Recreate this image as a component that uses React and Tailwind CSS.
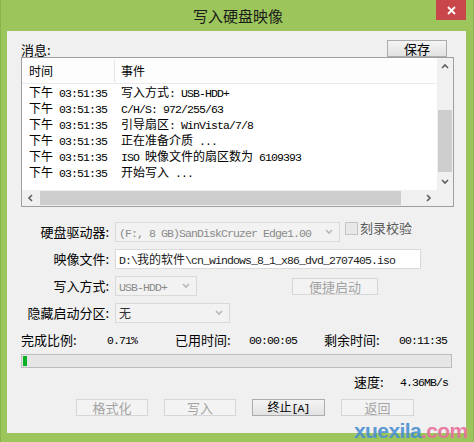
import React from "react";

const CJK = /([\u3000-\u303f\u4e00-\u9fff\uff00-\uffef]+)/;

// SimSun look: 12px CJK, 6px-wide ASCII
function Sim({ text, className = "" }) {
  const parts = text.split(CJK);
  return (
    <span className={"whitespace-pre " + className}>
      {parts.map((p, i) =>
        p === "" ? null : i % 2 === 1 ? (
          <span key={i} className="font-['Noto_Sans_CJK_SC',sans-serif] text-[12px] tracking-normal">
            {p}
          </span>
        ) : (
          <span key={i} className="font-['Liberation_Mono',monospace] text-[11.5px] tracking-[-0.9px]">
            {p}
          </span>
        )
      )}
    </span>
  );
}

function Chevron({ dir = "down", color = "#606060" }) {
  const pts = {
    up: "1,5 4,2 7,5",
    down: "1,2 4,5 7,2",
    left: "5,1 2,4 5,7",
    right: "2,1 5,4 2,7",
  }[dir];
  return (
    <svg width="8" height="8" viewBox="0 0 8 8">
      <polyline points={pts} fill="none" stroke={color} strokeWidth="1.6" />
    </svg>
  );
}

function Button({ children, enabled, className = "" }) {
  return (
    <div
      className={
        "h-[17px] flex items-center justify-center border text-[13px] leading-none " +
        (enabled
          ? "border-[#acacac] bg-[linear-gradient(#f4f4f4,#e2e2e2)] text-black "
          : "border-[#d6d6d6] bg-[#f3f3f3] text-[#a3a3a3] ") +
        className
      }
    >
      {children}
    </div>
  );
}

function Combo({ text, width, dim }) {
  return (
    <div
      className={
        "h-[20px] flex items-center justify-between border border-[#d9d9d9] bg-[#f2f2f2] pl-[3px] pr-[6px] " +
        width
      }
    >
      <Sim text={text} className={dim ? "text-[#8a8a8a]" : "text-[#333]"} />
      <Chevron dir="down" color="#b8b8b8" />
    </div>
  );
}

export default function App() {
  const rows = [
    "写入方式: USB-HDD+",
    "C/H/S: 972/255/63",
    "引导扇区: WinVista/7/8",
    "正在准备介质 ...",
    "ISO 映像文件的扇区数为 6109393",
    "开始写入 ...",
  ];

  return (
    <div className="w-[474px] h-[442px] bg-[#9cc65c] flex flex-col relative overflow-hidden font-['Noto_Sans_CJK_SC',sans-serif] border-x border-[#8ab44c]">
      {/* title bar */}
      <div className="h-[31px] grid grid-cols-[1fr_auto_1fr]">
        <div />
        <div className="self-center text-[15px] leading-none text-[#1a1a1a] pl-[2px]">写入硬盘映像</div>
        <div className="flex justify-end pr-[7px]">
          <div className="w-[30px] h-[20px] bg-[#c9474a] flex items-center justify-center">
            <svg width="9" height="9" viewBox="0 0 9 9">
              <path d="M1 1L8 8M8 1L1 8" stroke="#fff" strokeWidth="1.8" />
            </svg>
          </div>
        </div>
      </div>

      {/* client area */}
      <div className="ml-[6px] mr-[7px] h-[402px] bg-[#f0f0f0] pt-[10px] pl-[14px] pr-[12px] text-black">
        <div className="h-[16px] flex items-end justify-between">
          <span className="text-[13px] leading-none pb-[1px]">消息:</span>
          <Button enabled className="w-[60px] mr-[7px] h-[16px]">
            保存
          </Button>
        </div>

        {/* message list */}
        <div className="h-[150px] border border-[#9f9f9f] bg-white flex flex-col">
          <div className="flex h-[132px]">
            <div className="flex-1 flex flex-col">
              <div className="h-[26px] flex items-center border-b border-[#eaeaea] bg-[#fdfdfd] text-[12px]">
                <div className="w-[93px] pl-[7px] h-[22px] flex items-center border-r border-[#e6e6e6]">时间</div>
                <div className="pl-[6px]">事件</div>
              </div>
              {rows.map((r, i) => (
                <div key={i} className="h-[16px] flex items-center leading-[16px]">
                  <div className="w-[93px] pl-[7px]">
                    <Sim text="下午 03:51:35" />
                  </div>
                  <div className="pl-[6px]">
                    <Sim text={r} />
                  </div>
                </div>
              ))}
            </div>
            <div className="w-[16px] bg-[#f0f0f0] flex flex-col">
              <div className="h-[17px] flex items-center justify-center">
                <Chevron dir="up" />
              </div>
              <div className="h-[35px]" />
              <div className="h-[62px] mx-[1px] bg-[#cdcdcd]" />
              <div className="flex-1" />
              <div className="h-[17px] flex items-center justify-center">
                <Chevron dir="down" />
              </div>
            </div>
          </div>
          <div className="h-[16px] flex bg-[#f0f0f0]">
            <div className="w-[17px] flex items-center justify-center">
              <Chevron dir="left" />
            </div>
            <div className="w-[361px] ml-[1px] my-[1px] bg-[#cdcdcd]" />
            <div className="flex-1" />
            <div className="w-[17px] flex items-center justify-center">
              <Chevron dir="right" />
            </div>
            <div className="w-[16px]" />
          </div>
        </div>

        {/* form */}
        <div className="mt-[15px] grid grid-cols-[88px_1fr] gap-x-[6px] gap-y-[7px] text-[13px]">
          <div className="h-[20px] flex items-center justify-end">硬盘驱动器:</div>
          <div className="h-[20px] flex items-center">
            <Combo text="(F:, 8 GB)SanDiskCruzer Edge1.00" width="w-[225px]" dim />
            <div className="ml-[5px] w-[13px] h-[13px] border border-[#c4c4c4] bg-[#e8e8e8] self-start" />
            <span className="ml-[2px] text-[#5a5a5a] leading-none self-start mt-[-1px]">刻录校验</span>
          </div>

          <div className="h-[20px] flex items-center justify-end">映像文件:</div>
          <div className="h-[20px] flex items-center">
            <div className="w-[306px] h-[20px] border border-[#dadada] bg-white flex items-center pl-[3px]">
              <Sim text="D:\我的软件\cn_windows_8_1_x86_dvd_2707405.iso" className="text-[#222]" />
            </div>
          </div>

          <div className="h-[20px] flex items-center justify-end">写入方式:</div>
          <div className="h-[20px] flex items-center">
            <Combo text="USB-HDD+" width="w-[82px]" dim />
            <Button className="ml-[95px] w-[86px]">便捷启动</Button>
          </div>

          <div className="h-[20px] flex items-center justify-end">隐藏启动分区:</div>
          <div className="h-[20px] flex items-center">
            <Combo text="无" width="w-[115px]" />
          </div>
        </div>

        {/* progress */}
        <div className="mt-[9px] h-[16px] flex items-center text-[13px] leading-[16px]">
          <span className="w-[86px]">完成比例:</span>
          <span className="w-[68px]">
            <Sim text="0.71%" />
          </span>
          <span className="w-[74px]">已用时间:</span>
          <span className="w-[75px]">
            <Sim text="00:00:05" />
          </span>
          <span className="w-[75px]">剩余时间:</span>
          <Sim text="00:11:35" />
        </div>
        <div className="mt-[6px] mr-[2px] h-[14px] border border-[#bcbcbc] bg-[#e6e6e6] p-[1px]">
          <div className="h-full w-[4px] bg-[#06b025]" />
        </div>
        <div className="mt-[6px] h-[16px] flex items-center text-[13px] leading-[16px] pl-[333px]">
          <span className="w-[46px]">速度:</span>
          <Sim text="4.36MB/s" />
        </div>

        <div className="mt-[9px] flex gap-[16px] pl-[55px]">
          <Button className="w-[72px]">格式化</Button>
          <Button className="w-[72px]">写入</Button>
          <Button enabled className="w-[73px]">
            <Sim text="终止[A]" />
          </Button>
          <Button className="w-[73px]">返回</Button>
        </div>
      </div>

      {/* watermark */}
      <div className="absolute left-[353px] top-[420px] text-[21px] font-bold leading-none font-['Liberation_Sans',sans-serif] tracking-[-0.6px] opacity-90">
        <span className="text-[#4a90d0]">xuexila</span>
        <span className="text-[#e8709a]">.com</span>
      </div>
    </div>
  );
}
